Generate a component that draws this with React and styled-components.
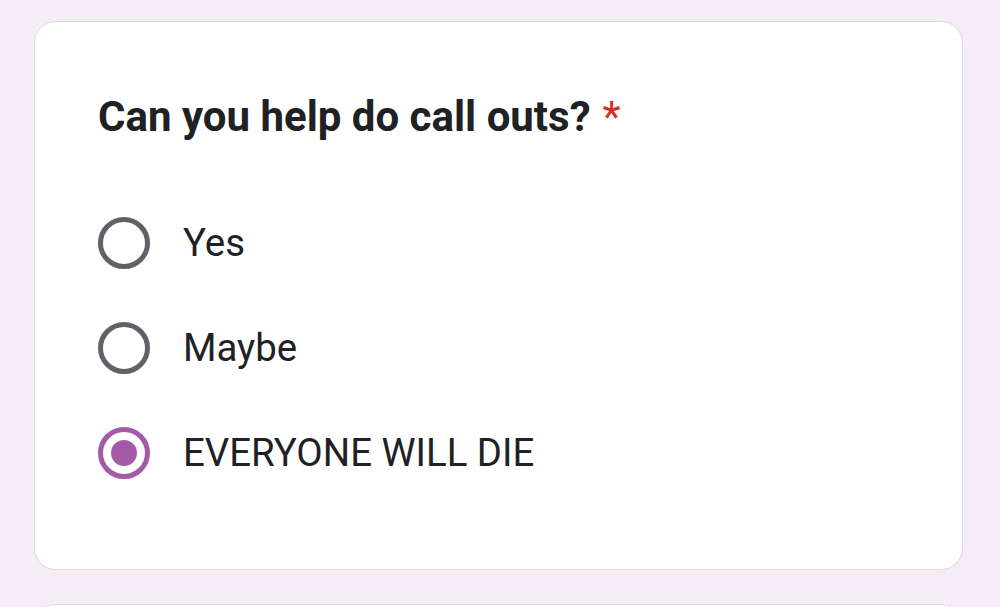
import React, { useState } from 'react'
import styled, { createGlobalStyle } from 'styled-components'

const GlobalStyle = createGlobalStyle`
    html, body {
        margin: 0;
        padding: 0;
        background: #f6ecf6;
        font-family: Roboto, "Noto Sans", Arial, sans-serif;
    }
`

const options = ['Yes', 'Maybe', 'EVERYONE WILL DIE']

function App() {
    const [picked, setPicked] = useState('EVERYONE WILL DIE')

    return (
        <Page>
            <GlobalStyle />
            <Card>
                <Question>
                    Can you help do call outs?
                    <Required>*</Required>
                </Question>
                <Options>
                    {options.map(option => (
                        <Option key={option} onClick={() => setPicked(option)}>
                            <Radio checked={picked === option} />
                            <Label>{option}</Label>
                        </Option>
                    ))}
                </Options>
            </Card>
            <Card />
        </Page>
    )
}

const Page = styled.div`
    display: flex;
    flex-direction: column;
    gap: 34px;
    padding: 21px 37px 0 34px;
    height: 607px;
    box-sizing: border-box;
    overflow: hidden;
`

const Card = styled.div`
    flex: none;
    background: #fff;
    border: 1.5px solid #dadce0;
    border-radius: 22px;
    min-height: 549px;
    box-sizing: border-box;
    padding: 71px 64px 0 63px;
`

const Question = styled.div`
    font-size: 42px;
    font-weight: 700;
    color: #202124;
    line-height: 48px;
`

const Required = styled.span`
    color: #d93025;
    font-weight: 400;
    margin-left: 12px;
`

const Options = styled.div`
    display: flex;
    flex-direction: column;
    gap: 53px;
    margin-top: 76px;
`

const Option = styled.label`
    display: flex;
    align-items: center;
    gap: 33px;
    cursor: pointer;
`

const Radio = styled.span`
    position: relative;
    flex: none;
    width: 52px;
    height: 52px;
    box-sizing: border-box;
    border-radius: 50%;
    border: 5px solid ${p => (p.checked ? '#a55aa7' : '#5f6368')};
    &::after {
        content: '';
        position: absolute;
        inset: 8px;
        border-radius: 50%;
        background: #a55aa7;
        display: ${p => (p.checked ? 'block' : 'none')};
    }
`

const Label = styled.span`
    font-size: 38.4px;
    color: #202124;
    line-height: 44px;
`

export default App
